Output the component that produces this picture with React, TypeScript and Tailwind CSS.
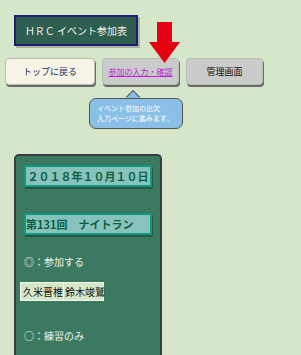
// HRC event attendance page

const font = "font-['Noto_Sans_CJK_JP','Noto_Sans',sans-serif]";

type NavButtonProps = {
  label: string;
  width: string;
  tone: "cream" | "gray";
  link?: boolean;
};

function NavButton({ label, width, tone, link }: NavButtonProps) {
  return (
    <button
      className={`${width} h-[27px] whitespace-nowrap rounded-[4px] border border-[#b8bcb4] leading-none shadow-[1px_2px_0_#6a6a6a] ${
        tone === "cream" ? "bg-[#f7f4e6] text-[#1d2a5a]" : "bg-[#c9cccb] text-[#111]"
      } ${link ? "text-[8px]" : "text-[9px]"}`}
      type="button"
    >
      {link ? <span className="text-[#c21bd9] underline">{label}</span> : label}
    </button>
  );
}

export default function App() {
  return (
    <div className={`${font} relative h-[355px] w-[301px] overflow-hidden bg-[#d6e7c9]`}>
      {/* title */}
      <div className="ml-[14px] pt-[15px]">
        <div className="flex h-[31px] w-[124px] items-center justify-center whitespace-nowrap border-2 border-[#1f1d78] bg-[#2e5e4f] text-[10px] text-[#f2f2f2] shadow-[2px_2px_0_#a9b4a2]">
          ＨＲＣ イベント参加表
        </div>
      </div>

      {/* red arrow pointing at the entry button */}
      <svg className="absolute left-[149px] top-[22px]" width="31" height="41" viewBox="0 0 31 41">
        <path d="M8 0 H23 V20 H31 L15.5 41 L0 20 H8 Z" fill="#e60012" />
      </svg>

      {/* buttons */}
      <div className="ml-[5px] mt-[12px] flex gap-[7px]">
        <NavButton label="トップに戻る" tone="cream" width="w-[90px]" />
        <NavButton label="参加の入力・確認" tone="gray" width="w-[77px]" link />
        <NavButton label="管理画面" tone="gray" width="w-[77px]" />
      </div>

      {/* speech bubble */}
      <div className="relative ml-[89px] mt-[13px] w-[94px]">
        <div className="absolute left-[39px] top-[-6px] h-[10px] w-[10px] rotate-45 border-l-[1.5px] border-t-[1.5px] border-[#555] bg-[#8ac0e8]" />
        <div className="relative h-[31px] whitespace-nowrap rounded-[7px] border-[1.5px] border-[#555] bg-[#8ac0e8] pl-[7px] pt-[4px] text-[7px] leading-[10px] text-white">
          <p>イベント参加の出欠</p>
          <p>入力ページに進みます。</p>
        </div>
      </div>

      {/* event card */}
      <div className="ml-[14px] mt-[25px] h-[220px] w-[148px] rounded-t-[5px] border-2 border-b-0 border-[#3b3b48] bg-[#3b7a60] px-[8px] pt-[9px]">
        <div className="flex h-[22px] w-[128px] items-center justify-center whitespace-nowrap border-2 border-[#0c9b7c] bg-[#88c2bd] text-[11px] font-bold text-[#0b5f3c] shadow-[1px_2px_0_#2c5444]">
          ２０１８年１０月１０日
        </div>
        <div className="mt-[26px] flex h-[22px] w-[128px] items-center whitespace-nowrap border-2 border-[#0c9b7c] bg-[#88c2bd] text-[11px] font-bold text-[#0b5f3c] shadow-[1px_2px_0_#2c5444]">
          第131回　ナイトラン
        </div>

        <p className="mt-[20px] text-[10px] leading-[14px] text-[#eef3ee]">◎：参加する</p>

        <div className="-ml-[4px] mt-[13px] flex h-[19px] w-[84px] whitespace-nowrap border border-[#f4f7f0] bg-[#d6e7c9] text-[10px] leading-[17px] text-[#111]">
          <span className="w-[43px] border-r border-[#f4f7f0] pl-[2px]">久米晋椎</span>
          <span className="flex-1 pl-[1px]">鈴木竣鷲</span>
        </div>

        <p className="mt-[28px] text-[10px] leading-[14px] text-[#eef3ee]">○：練習のみ</p>
      </div>
    </div>
  );
}
